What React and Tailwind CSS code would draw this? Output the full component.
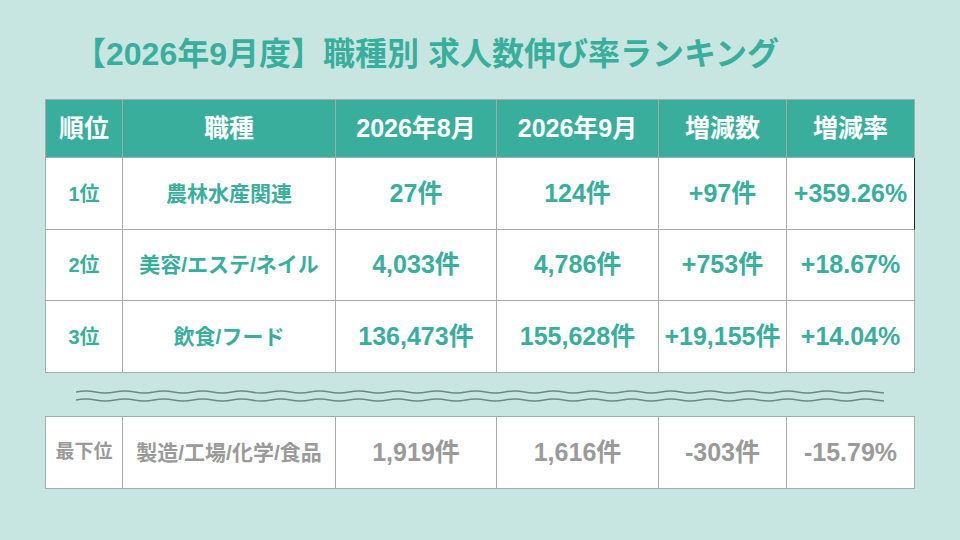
const FONT = 'font-["Liberation_Sans","Noto_Sans_CJK_JP",sans-serif]';

const headers = ['順位', '職種', '2026年8月', '2026年9月', '増減数', '増減率'];

const rows = [
  { rank: '1位', job: '農林水産関連', aug: '27件', sep: '124件', diff: '+97件', rate: '+359.26%', h: 'h-[72px]', dark: true },
  { rank: '2位', job: '美容/エステ/ネイル', aug: '4,033件', sep: '4,786件', diff: '+753件', rate: '+18.67%', h: 'h-[71px]' },
  { rank: '3位', job: '飲食/フード', aug: '136,473件', sep: '155,628件', diff: '+19,155件', rate: '+14.04%', h: 'h-[72px]' },
];

const cols = 'grid grid-cols-[77px_213px_161px_162px_128px_128px]';
const cell = 'flex items-center justify-center border-r border-b border-[#a9a9a9] font-bold whitespace-nowrap';

const Wave = () => {
  const period = 39;
  const width = 808;
  const line = (y) => {
    let d = `M0 ${y}`;
    for (let x = 0; x < width; x += period) {
      d += ` q${period / 4} -1.8 ${period / 2} 0 t${period / 2} 0`;
    }
    return d;
  };
  return (
    <svg width="808" height="16" viewBox="0 0 808 16" className="block">
      <path d={line(4)} fill="none" stroke="#6f8883" strokeWidth="1.5" />
      <path d={line(12)} fill="none" stroke="#6f8883" strokeWidth="1.5" />
    </svg>
  );
};

export default function App() {
  return (
    <div className={`w-[960px] h-[540px] bg-[#c8e6e1] ${FONT} overflow-hidden`}>
      <h1 className="pl-[74px] pt-[35px] h-[99px] text-[32px] font-bold text-[#3aae9c] leading-[38px] whitespace-nowrap">
        【2026年9月度】職種別 求人数伸び率ランキング
      </h1>

      <div className="ml-[45px] w-[870px] border-l border-t border-[#a9a9a9]">
        <div className={`${cols} h-[58px] bg-[#3aae9c] text-white text-[25px]`}>
          {headers.map((t) => (
            <div key={t} className={cell}>{t}</div>
          ))}
        </div>
        {rows.map((r) => (
          <div key={r.rank} className={`${cols} ${r.h} bg-white text-[#3aae9c]`}>
            <div className={`${cell} text-[20px]`}>{r.rank}</div>
            <div className={`${cell} text-[21px]`}>{r.job}</div>
            <div className={`${cell} text-[25px]`}>{r.aug}</div>
            <div className={`${cell} text-[25px]`}>{r.sep}</div>
            <div className={`${cell} text-[25px]`}>{r.diff}</div>
            <div className={`${cell} text-[25px] ${r.dark ? 'border-r-[#222]' : ''}`}>{r.rate}</div>
          </div>
        ))}
      </div>

      <div className="pl-[76px] pt-[15px] h-[43px]">
        <Wave />
      </div>

      <div className="ml-[45px] w-[870px] border-l border-t border-[#a9a9a9]">
        <div className={`${cols} h-[72px] bg-white text-[#9a9a9a]`}>
          <div className={`${cell} text-[19px]`}>最下位</div>
          <div className={`${cell} text-[21px]`}>製造/工場/化学/食品</div>
          <div className={`${cell} text-[25px]`}>1,919件</div>
          <div className={`${cell} text-[25px]`}>1,616件</div>
          <div className={`${cell} text-[25px]`}>-303件</div>
          <div className={`${cell} text-[25px]`}>-15.79%</div>
        </div>
      </div>
    </div>
  );
}
